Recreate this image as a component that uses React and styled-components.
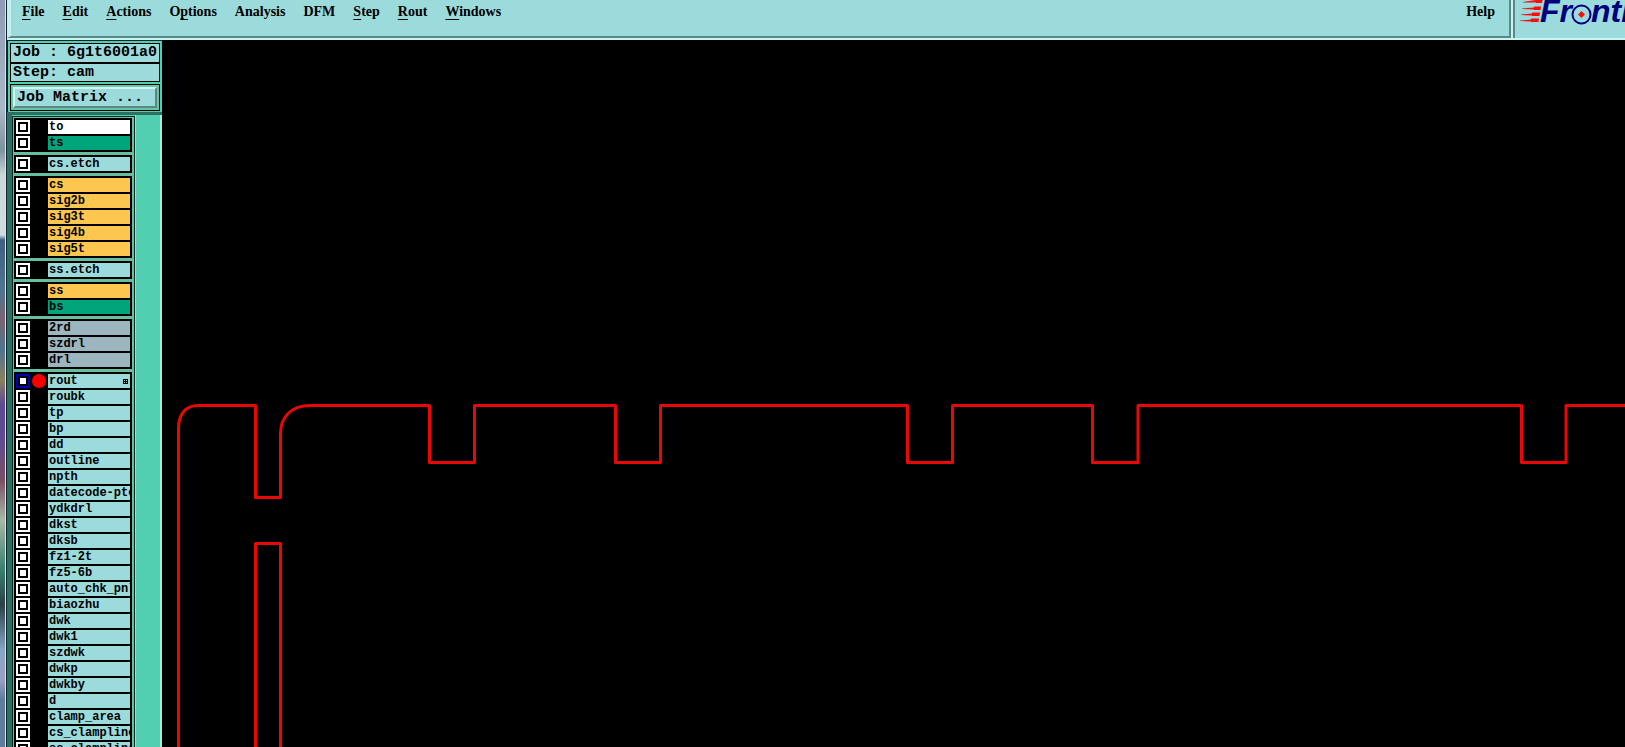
import React from "react";
import styled, { createGlobalStyle } from "styled-components";

const menus = [
  { label: "File", key: 0 },
  { label: "Edit", key: 0 },
  { label: "Actions", key: 0 },
  { label: "Options", key: 1 },
  { label: "Analysis" },
  { label: "DFM" },
  { label: "Step", key: 0 },
  { label: "Rout", key: 0 },
  { label: "Windows", key: 0 },
];

const colors = {
  white: "#ffffff",
  mask: "#00a57c",
  misc: "#9bdbdb",
  signal: "#fdc64f",
  drill: "#9cb5be",
};

const groups = [
  [["to", "white"], ["ts", "mask"]],
  [["cs.etch", "misc"]],
  [
    ["cs", "signal"],
    ["sig2b", "signal"],
    ["sig3t", "signal"],
    ["sig4b", "signal"],
    ["sig5t", "signal"],
  ],
  [["ss.etch", "misc"]],
  [["ss", "signal"], ["bs", "mask"]],
  [["2rd", "drill"], ["szdrl", "drill"], ["drl", "drill"]],
  [
    "rout",
    "roubk",
    "tp",
    "bp",
    "dd",
    "outline",
    "npth",
    "datecode-pte",
    "ydkdrl",
    "dkst",
    "dksb",
    "fz1-2t",
    "fz5-6b",
    "auto_chk_pnl",
    "biaozhu",
    "dwk",
    "dwk1",
    "szdwk",
    "dwkp",
    "dwkby",
    "d",
    "clamp_area",
    "cs_clampline",
    "ss_clampline",
  ].map((name) => [name, "misc"]),
];

function MenuLabel({ label, hot }) {
  if (hot === undefined) return label;
  return (
    <>
      {label.slice(0, hot)}
      <u>{label[hot]}</u>
      {label.slice(hot + 1)}
    </>
  );
}

function Logo() {
  return (
    <svg width="112" height="36" role="img" aria-label="Frontline">
      <g fill="#fb0d0d">
        <path d="M8 2L21 0V-2H28L27 3H21V2.5L8 2.5Z" />
        <path d="M7 8.5L19 7.5V6.5H26L25.5 10H19V9.5L7 9Z" />
        <path d="M6 14.5L17 13.5V12.5H25L24.5 16H17V15.5L6 15Z" />
        <path d="M5 20.5L16 19.5V18.5H24L23.5 22H16V21.5L5 21Z" />
      </g>
      <g
        fill="#00007c"
        fontFamily="Liberation Sans, Arial, sans-serif"
        fontSize="32"
        fontWeight="700"
        fontStyle="italic"
      >
        <text x="25" y="22">Fr</text>
        <text x="76" y="22">ntl</text>
      </g>
      <circle cx="66.5" cy="14.5" r="9" fill="#9bdbdb" stroke="#00007c" strokeWidth="2" />
      <path d="M66.5 11L70 14.5L66.5 18L63 14.5Z" fill="#fb0d0d" />
    </svg>
  );
}

function LayerRow({ name, kind }) {
  const active = name === "rout";
  return (
    <Row>
      <Tick type="checkbox" aria-label={name} $active={active} />
      <Marker>{active && <Dot />}</Marker>
      <LayerName $color={colors[kind]}>
        {name}
        {active && (
          <Grid width="5" height="5" viewBox="0 0 5 5">
            <path d="M0 0H5V5H0ZM1 1V2H2V1ZM3 1V2H4V1ZM1 3V4H2V3ZM3 3V4H4V3Z" fillRule="evenodd" />
          </Grid>
        )}
      </LayerName>
    </Row>
  );
}

function App() {
  return (
    <Screen>
      <GlobalStyle />
      <Desktop />
      <Window>
        <Header>
          <MenuBar>
            {menus.map((m) => (
              <MenuButton key={m.label}>
                <MenuLabel label={m.label} hot={m.key} />
              </MenuButton>
            ))}
            <MenuButton $right>Help</MenuButton>
          </MenuBar>
          <Brand>
            <Logo />
          </Brand>
        </Header>
        <Body>
          <Sidebar>
            <JobPanel>
              <Info>Job : 6g1t6001a0</Info>
              <Info>Step: cam</Info>
              <MatrixFrame>
                <MatrixButton>Job Matrix ...</MatrixButton>
              </MatrixFrame>
            </JobPanel>
            <LayerPanel>
              <LayerList>
                {groups.map((group) => (
                  <Group key={group[0][0]}>
                    {group.map(([name, kind]) => (
                      <LayerRow key={name} name={name} kind={kind} />
                    ))}
                  </Group>
                ))}
              </LayerList>
              <Trough />
            </LayerPanel>
          </Sidebar>
          <Canvas>
            <g fill="none" stroke="#e80808" strokeWidth="3" strokeLinejoin="round">
              <path d="M16.5 2000V388C16.5 374 24 365.5 36 365.5H93.5V457.5H118.5V394C118.5 376 130 365.5 148 365.5H267.5V422.5H312.5V365.5H453.5V422.5H498.5V365.5H745.5V422.5H790.5V365.5H930.5V422.5H976V365.5H1359.5V422.5H1404V365.5H3000" />
              <path d="M93.5 2000V503.5H118.5V2000" />
            </g>
          </Canvas>
        </Body>
      </Window>
    </Screen>
  );
}

const GlobalStyle = createGlobalStyle`
  * {
    box-sizing: border-box;
  }
  body {
    margin: 0;
    background: #000;
    overflow: hidden;
  }
  button {
    border: none;
    padding: 0;
    background: none;
    color: #000;
  }
`;

const Screen = styled.div`
  display: flex;
  height: 100vh;
  overflow: hidden;
`;

const Desktop = styled.div`
  width: 7px;
  flex: none;
  border-right: 1px solid #10262a;
  background:
    linear-gradient(#d5e4ea, #d5e4ea) right / 1px 100% no-repeat,
    linear-gradient(
      #8d9cb4 0,
      #a9b8c8 110px,
      #7f929f 150px,
      #c9d6da 175px,
      #d0dcde 235px,
      #3d6180 240px,
      #4f7590 290px,
      #7b6473 320px,
      #4f7590 350px,
      #8b7f60 380px,
      #5f4a96 405px,
      #5f4a96 435px,
      #7b4f63 480px,
      #a9b8a8 520px,
      #38806f 570px,
      #2c4048 605px,
      #88a5c4 650px,
      #9c9fc4 680px,
      #5d7d98 700px,
      #5d7d98 747px
    );
`;

const Window = styled.div`
  flex: 1;
  min-width: 0;
  display: flex;
  flex-direction: column;
`;

const Header = styled.header`
  flex: none;
  display: flex;
  height: 40px;
  background: #9bdbdb;
  border-bottom: 2px solid #c9f2f2;
`;

const MenuBar = styled.nav`
  flex: 1;
  display: flex;
  align-items: flex-start;
  gap: 18px;
  padding: 3px 14px 0 11px;
  border-left: 4px solid #c4eeee;
  border-right: 2px solid #5b8787;
  border-bottom: 2px solid #5b8787;
`;

const MenuButton = styled.button`
  margin-left: ${(props) => (props.$right ? "auto" : "0")};
  font: bold 14px/18px "Liberation Serif", "Times New Roman", serif;

  u {
    text-decoration-thickness: 1px;
    text-underline-offset: 3px;
    text-decoration-skip-ink: none;
  }
`;

const Brand = styled.div`
  flex: none;
  width: 114px;
  overflow: hidden;
  border-left: 2px solid #c9f2f2;
  box-shadow: inset 2px 0 #5b8787;
  padding-left: 2px;
`;

const Body = styled.div`
  flex: 1;
  min-height: 0;
  display: flex;
`;

const Sidebar = styled.aside`
  flex: none;
  width: 155px;
  display: flex;
  flex-direction: column;
  background: #52ceb0;
`;

const JobPanel = styled.div`
  flex: none;
  padding: 2px 2px 1px;
  border-top: 1px solid #10262a;
  border-left: 1px solid #10262a;
  background: #52ceb0;
`;

const Info = styled.div`
  height: 20px;
  padding-left: 2px;
  border: 1px solid #000;
  background: #9bdbdb;
  font: bold 15px/18px "Liberation Mono", "Courier New", monospace;
  white-space: nowrap;

  & + & {
    height: 19px;
  }
`;

const MatrixFrame = styled.div`
  margin-top: 2px;
  padding: 2px;
  border: 1px solid #000;
  background: #6cc4a8;
`;

const MatrixButton = styled.button`
  display: block;
  width: 100%;
  height: 21px;
  padding-left: 2px;
  border: 2px solid;
  border-color: #cdf5f3 #5b8787 #5b8787 #cdf5f3;
  background: #9bdbdb;
  font: bold 15px/17px "Liberation Mono", "Courier New", monospace;
  text-align: left;
`;

const LayerPanel = styled.div`
  flex: 1;
  min-height: 0;
  display: flex;
  border-top: 3px solid #2b7060;
  border-left: 5px solid #2b7060;
`;

const LayerList = styled.div`
  flex: none;
  width: 123px;
  display: flex;
  flex-direction: column;
  gap: 3px;
  margin-top: 1px;
  padding: 1px 2px 0 1px;
  border: 1px solid #0c2a22;
  border-bottom: none;
  background: #67bfa2;
  overflow: hidden;
`;

const Group = styled.div`
  flex: none;
  display: flex;
  flex-direction: column;
  gap: 2px;
  padding: 2px;
  background: #000;
`;

const Row = styled.div`
  display: flex;
  height: 14px;
`;

const Tick = styled.input`
  appearance: none;
  flex: none;
  width: 14px;
  height: 14px;
  margin: 0;
  border: 2px solid ${(props) => (props.$active ? "#0000b8" : "#fff")};
  background: #fff;
  box-shadow: inset 0 0 0 2px #000;
`;

const Marker = styled.span`
  flex: none;
  width: 18px;
  display: flex;
  justify-content: center;
`;

const Dot = styled.span`
  width: 14px;
  height: 14px;
  border-radius: 50%;
  background: #f80000;
`;

const LayerName = styled.span`
  flex: 1;
  min-width: 0;
  display: flex;
  justify-content: space-between;
  align-items: center;
  padding-left: 1px;
  background: ${(props) => props.$color};
  font: bold 12px/14px "Liberation Mono", "Courier New", monospace;
  white-space: nowrap;
  overflow: hidden;
`;

const Grid = styled.svg`
  flex: none;
  margin-right: 2px;
`;

const Trough = styled.div`
  flex: 1;
  border-left: 1px solid #8fe3cf;
  border-right: 2px solid #a5eedd;
  background: #52ceb0;
`;

const Canvas = styled.svg`
  flex: 1;
  min-width: 0;
  height: 100%;
  display: block;
  background: #000;
`;

export default App;
